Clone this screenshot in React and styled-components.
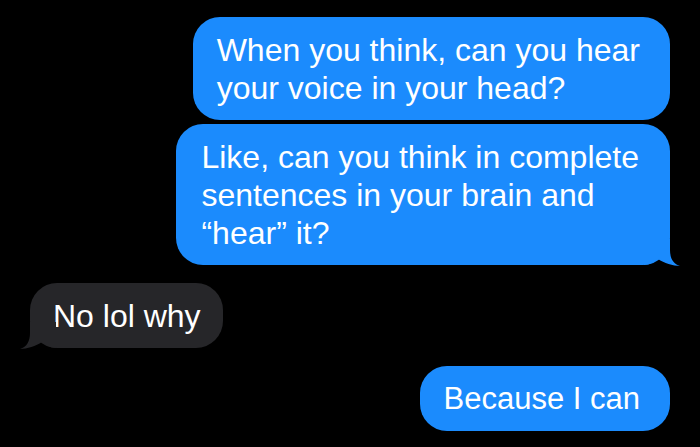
import React from "react";
import styled, { createGlobalStyle } from "styled-components";

const Global = createGlobalStyle`
  html, body { margin: 0; padding: 0; background: #000; }
  body { font-family: "Liberation Sans", Arial, sans-serif; }
`;

const Thread = styled.div`
  width: 700px;
  height: 447px;
  box-sizing: border-box;
  background: #000;
  display: flex;
  flex-direction: column;
  padding: 17px 30px 0 30px;
  overflow: hidden;
`;

const Bubble = styled.div`
  position: relative;
  align-self: ${(p) => (p.$me ? "flex-end" : "flex-start")};
  margin-top: ${(p) => p.$gap || 0}px;
  background: ${(p) => (p.$me ? "#1b8bfd" : "#262629")};
  color: #fff;
  border-radius: 27px;
  padding: 14px ${(p) => p.$pr || 30}px 13px ${(p) => p.$pl || 24}px;
  font-size: ${(p) => p.$fs || 32}px;
  line-height: 38px;
  white-space: nowrap;
`;

const Tail = styled.svg`
  position: absolute;
  bottom: -1px;
  width: 36px;
  height: 27px;
  ${(p) => (p.$left ? "left: -10px; transform: scaleX(-1);" : "right: -10px;")}
`;

const TailShape = ({ left, color }) => (
  <Tail $left={left} viewBox="0 0 36 27">
    <path
      d="M0 0 H26 V11 C26 19 29 25 36 27 C29 27 20 24 14 20 C10 23 5 26 0 26 Z"
      fill={color}
    />
  </Tail>
);

export default function App() {
  return (
    <>
      <Global />
      <Thread>
        <Bubble $me>
          When you think, can you hear
          <br />
          your voice in your head?
        </Bubble>
        <Bubble $me $gap={4} $pl={25} $pr={31}>
          Like, can you think in complete
          <br />
          sentences in your brain and
          <br />
          “hear” it?
          <TailShape color="#1b8bfd" />
        </Bubble>
        <Bubble $gap={18} $pl={23} $pr={22}>
          No lol why
          <TailShape left color="#262629" />
        </Bubble>
        <Bubble $me $gap={18} $fs={31}>
          Because I can
        </Bubble>
      </Thread>
    </>
  );
}
